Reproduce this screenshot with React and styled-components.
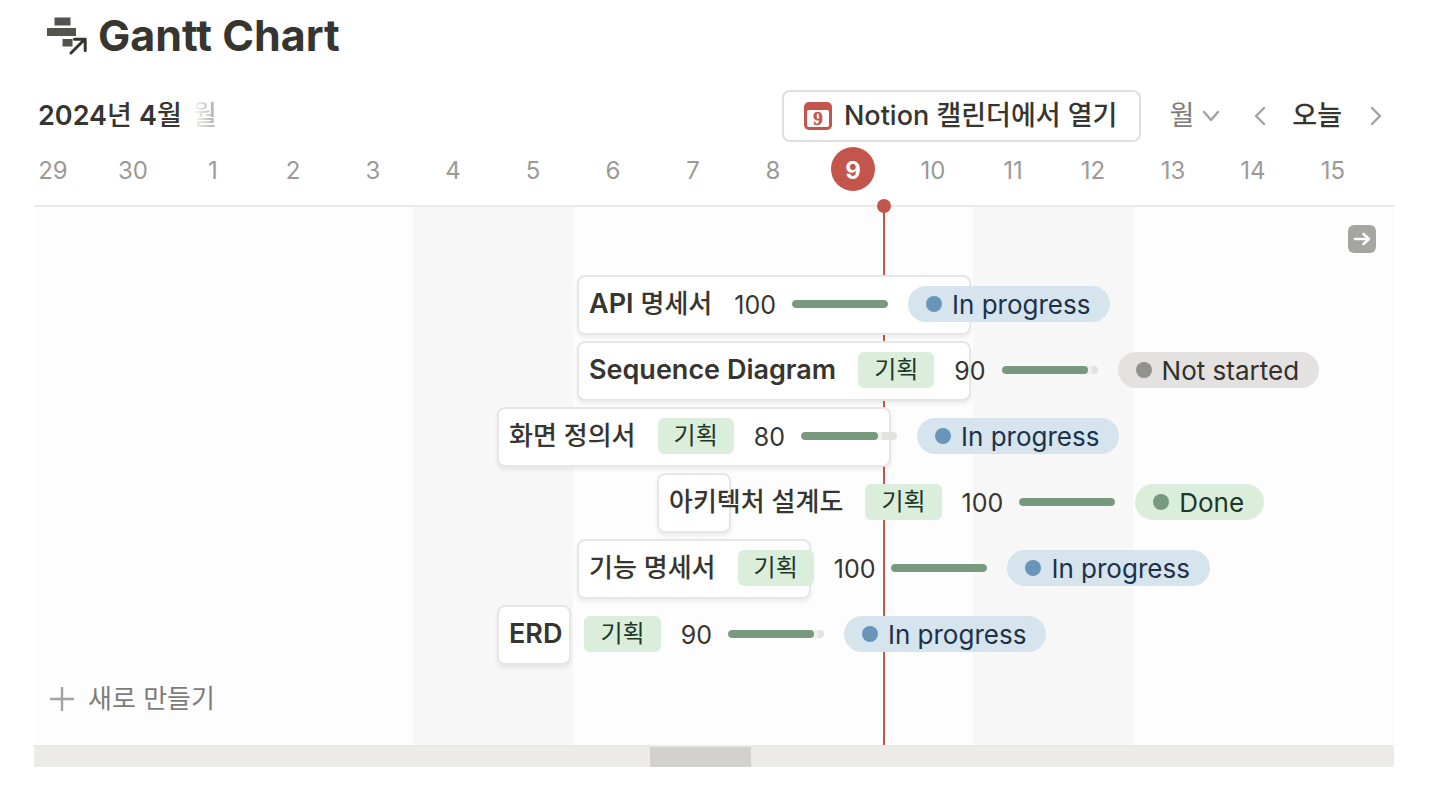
import React from "react";
import styled, { createGlobalStyle } from "styled-components";

const DAY = 80;

const GlobalStyle = createGlobalStyle`
  *, *::before, *::after { box-sizing: border-box; }
  body {
    margin: 0;
    background: #fff;
    color: #37352f;
    font-family: Inter, "Noto Sans CJK KR", sans-serif;
    font-size: 26px;
    line-height: 36px;
  }
  button {
    margin: 0;
    padding: 0;
    border: 0;
    background: none;
    color: inherit;
    font: inherit;
    cursor: pointer;
  }
`;

const Page = styled.main`
  padding: 8px 58px 18px 34px;
`;

const TitleRow = styled.header`
  display: flex;
  align-items: center;
  gap: 10px;
  height: 56px;
  padding-left: 12px;
`;

const Title = styled.h1`
  margin: 0;
  padding-bottom: 2px;
  font-size: 43px;
  line-height: 52px;
  font-weight: 700;
`;

const Toolbar = styled.div`
  display: flex;
  align-items: center;
  justify-content: space-between;
  height: 52px;
  margin-top: 26px;
  font-size: 27px;
`;

const Months = styled.div`
  display: flex;
  align-items: center;
  gap: 10px;
  padding-left: 4px;
`;

const Month = styled.h2`
  margin: 0;
  font-size: inherit;
  font-weight: 500;
`;

const NextMonth = styled.span`
  font-weight: 500;
  color: transparent;
  background: linear-gradient(90deg, #fff, #a9a8a5);
  background-clip: text;
`;

const Latin = styled.span`
  font-size: 27px;
  font-weight: 600;
`;

const Controls = styled.nav`
  display: flex;
  align-items: center;
  padding-right: 12px;
`;

const OpenButton = styled.button`
  display: flex;
  align-items: center;
  gap: 12px;
  height: 52px;
  padding: 0 22px 0 20px;
  border: 2px solid #dededc;
  border-radius: 8px;
  font-weight: 500;
`;

const ButtonText = styled.span`
  line-height: 38px;
`;

const RangeButton = styled.button`
  display: flex;
  align-items: center;
  gap: 8px;
  margin-left: 28px;
  color: #7d7c78;
`;

const StepButton = styled.button`
  display: flex;
  margin-left: ${(p) => p.$gap}px;
`;

const TodayButton = styled.button`
  margin-left: 26px;
  font-weight: 500;
  line-height: 38px;
`;

const Timeline = styled.section`
  overflow: hidden;
`;

const Days = styled.ol`
  display: grid;
  grid-auto-flow: column;
  grid-auto-columns: ${DAY}px;
  justify-content: start;
  height: 63px;
  margin: 0 0 0 -21px;
  padding: 5px 0 0;
  list-style: none;
`;

const Day = styled.li`
  display: flex;
  align-items: flex-start;
  justify-content: center;
  font-size: 24px;
  line-height: 47px;
  color: #9b9a97;
`;

const TodayBadge = styled.strong`
  width: 44px;
  height: 44px;
  border-radius: 50%;
  background: #c4554d;
  color: #fff;
  font-weight: 700;
  text-align: center;
`;

const Board = styled.div`
  display: grid;
  grid-template-columns: minmax(0, 1fr);
  border-top: 2px solid #e9e9e8;
  background: #fdfdfd;
`;

const Columns = styled.div`
  grid-area: 1 / 1;
  display: grid;
  grid-template-columns: repeat(17, ${DAY}px);
  margin-left: -21px;
`;

const Weekend = styled.div`
  grid-row: 1;
  grid-column: ${(p) => p.$from} / span 2;
  background: #f7f7f7;
`;

const TodayLine = styled.div`
  position: relative;
  grid-row: 1;
  grid-column: 11;
  width: 2px;
  margin-left: 70px;
  background: #c4554d;

  &::before {
    content: "";
    position: absolute;
    top: -8px;
    left: -6px;
    width: 14px;
    height: 14px;
    border-radius: 50%;
    background: #c4554d;
  }
`;

const Content = styled.div`
  grid-area: 1 / 1;
  z-index: 1;
  display: flex;
  flex-direction: column;
  padding: 18px 0 16px;
`;

const JumpButton = styled.button`
  display: flex;
  align-items: center;
  justify-content: center;
  align-self: flex-end;
  width: 28px;
  height: 28px;
  margin-right: 18px;
  border-radius: 6px;
  background: #a5a5a2;
`;

const Rows = styled.ul`
  display: grid;
  gap: 6px;
  margin: 22px 0 0 -21px;
  padding: 0;
  list-style: none;
`;

const Row = styled.li`
  display: grid;
  grid-template-columns: repeat(17, ${DAY}px);
`;

const Bar = styled.article`
  grid-column: ${(p) => p.$start} / span ${(p) => p.$days};
  display: flex;
  align-items: center;
  min-width: 0;
  height: 60px;
  margin: 0 2px 0 4px;
  padding: 0 0 2px 10px;
  border: 2px solid #e6e6e5;
  border-radius: 8px;
  background: #fff;
  box-shadow: 0 3px 4px rgba(15, 15, 15, 0.07);
  white-space: nowrap;

  > * { flex-shrink: 0; }
`;

const TaskName = styled.h3`
  margin: 0 22px 0 0;
  font-size: inherit;
  font-weight: 500;
  line-height: 36px;
`;

const Tag = styled.span`
  height: 36px;
  margin-right: 20px;
  padding: 0 16px;
  border-radius: 6px;
  background: #dbeddb;
  color: #1c3829;
  font-size: 24px;
`;

const Percent = styled.span`
  margin-right: 16px;
  padding-top: 2px;
  font-size: 25px;
`;

const Track = styled.div`
  width: 96px;
  height: 8px;
  margin-right: 20px;
  border-radius: 4px;
  background: #e3e2e0;
  overflow: hidden;
`;

const Fill = styled.div`
  height: 8px;
  border-radius: 4px;
  background: #77997e;
  box-shadow: 0 0 0 4px #edf3ec;
`;

const tones = {
  "In progress": { back: "#d6e4ee", dot: "#6a95bb", text: "#1d3148" },
  "Not started": { back: "#e3e2e0", dot: "#91918e", text: "#32302c" },
  Done: { back: "#dbeddb", dot: "#77997e", text: "#1c3829" },
};

const Status = styled.span`
  display: flex;
  align-items: center;
  gap: 10px;
  height: 36px;
  padding: 0 20px 0 18px;
  border-radius: 18px;
  background: ${(p) => tones[p.$tone].back};
  color: ${(p) => tones[p.$tone].text};
  line-height: 38px;

  &::before {
    content: "";
    width: 16px;
    height: 16px;
    border-radius: 50%;
    background: ${(p) => tones[p.$tone].dot};
  }
`;

const StatusText = styled.span`
  padding-top: 2px;
`;

const NewButton = styled.button`
  display: flex;
  align-items: center;
  align-self: flex-start;
  gap: 14px;
  height: 60px;
  margin-top: 4px;
  padding-left: 16px;
  color: #7d7c78;
`;

const ScrollTrack = styled.div`
  height: 22px;
  border-top: 2px solid #e8e8e4;
  background: #ecebe7;
`;

const ScrollThumb = styled.div`
  width: 101px;
  height: 20px;
  background: #d2d1cd;
`;

const days = [29, 30, 1, 2, 3, 4, 5, 6, 7, 8, 9, 10, 11, 12, 13, 14, 15];

const tasks = [
  { name: "API 명세서", start: 8, days: 5, percent: 100, status: "In progress" },
  { name: "Sequence Diagram", start: 8, days: 5, tag: "기획", percent: 90, status: "Not started" },
  { name: "화면 정의서", start: 7, days: 5, tag: "기획", percent: 80, status: "In progress" },
  { name: "아키텍처 설계도", start: 9, days: 1, tag: "기획", percent: 100, status: "Done" },
  { name: "기능 명세서", start: 8, days: 3, tag: "기획", percent: 100, status: "In progress" },
  { name: "ERD", start: 7, days: 1, tag: "기획", percent: 90, status: "In progress" },
];

/* Latin runs are set a step larger and heavier than the Hangul beside them. */
const Mixed = ({ text }) =>
  text
    .split(/([A-Za-z0-9]+(?: [A-Za-z0-9]+)*)/)
    .map((part, i) => (i % 2 ? <Latin key={i}>{part}</Latin> : part));

const GanttIcon = () => (
  <svg width="42" height="42" viewBox="0 0 42 42" aria-hidden="true">
    <path d="M8.500 2.500h16v8h-16zM1 13h29v8H1zM16.500 24h10v7.500h-10z" fill="#55534e" />
    <path d="M25 38L39 24M28.500 24.300h10.700V35.500" fill="none" stroke="#fff" strokeWidth="6" />
    <path d="M25 38L39 24M28.500 24.300h10.700V35.500" fill="none" stroke="#37352f" strokeWidth="3" strokeLinecap="round" strokeLinejoin="round" />
  </svg>
);

const CalendarIcon = () => (
  <svg width="28" height="28" viewBox="0 0 28 28" aria-hidden="true">
    <rect width="28" height="28" rx="5" fill="#c4554d" />
    <rect x="3" y="8" width="22" height="17" rx="2" fill="#fff" />
    <text x="14" y="23" textAnchor="middle" fontFamily="Liberation Serif, serif" fontWeight="700" fontSize="19" fill="#c4554d" stroke="#c4554d" strokeWidth="0.500">9</text>
  </svg>
);

const Stroke = ({ w, h, d, color = "#a3a29f", width = 2.4 }) => (
  <svg width={w} height={h} viewBox={`0 0 ${w} ${h}`} fill="none" stroke={color} strokeWidth={width} strokeLinecap="round" strokeLinejoin="round" aria-hidden="true">
    <path d={d} />
  </svg>
);

export default function App() {
  return (
    <Page>
      <GlobalStyle />
      <TitleRow>
        <GanttIcon />
        <Title>Gantt Chart</Title>
      </TitleRow>
      <Toolbar>
        <Months>
          <Month>
            <Mixed text="2024년 4월" />
          </Month>
          <NextMonth>월</NextMonth>
        </Months>
        <Controls>
          <OpenButton type="button">
            <CalendarIcon />
            <ButtonText>Notion 캘린더에서 열기</ButtonText>
          </OpenButton>
          <RangeButton type="button">
            <ButtonText>월</ButtonText>
            <Stroke w={18} h={12} d="M2 2l7 8 7-8" />
          </RangeButton>
          <StepButton type="button" $gap={34} aria-label="이전">
            <Stroke w={12} h={20} d="M10 2L2 10l8 8" />
          </StepButton>
          <TodayButton type="button">오늘</TodayButton>
          <StepButton type="button" $gap={28} aria-label="다음">
            <Stroke w={12} h={20} d="M2 2l8 8-8 8" />
          </StepButton>
        </Controls>
      </Toolbar>
      <Timeline>
        <Days>
          {days.map((d) => (
            <Day key={d}>{d === 9 ? <TodayBadge>{d}</TodayBadge> : d}</Day>
          ))}
        </Days>
        <Board>
          <Columns>
            <Weekend $from={6} />
            <Weekend $from={13} />
            <TodayLine />
          </Columns>
          <Content>
            <JumpButton type="button" aria-label="앞으로 이동">
              <Stroke w={20} h={16} d="M3 8h14M11.500 3l5.500 5-5.500 5" color="#fff" width={2.6} />
            </JumpButton>
            <Rows>
              {tasks.map((t) => (
                <Row key={t.name}>
                  <Bar $start={t.start} $days={t.days}>
                    <TaskName>
                      <Mixed text={t.name} />
                    </TaskName>
                    {t.tag && <Tag>{t.tag}</Tag>}
                    <Percent>{t.percent}</Percent>
                    <Track>
                      <Fill style={{ width: `${t.percent}%` }} />
                    </Track>
                    <Status $tone={t.status}>
                      <StatusText>{t.status}</StatusText>
                    </Status>
                  </Bar>
                </Row>
              ))}
            </Rows>
            <NewButton type="button">
              <Stroke w={24} h={24} d="M12 1v22M1 12h22" />
              <ButtonText>새로 만들기</ButtonText>
            </NewButton>
          </Content>
        </Board>
        <ScrollTrack>
          <ScrollThumb style={{ marginLeft: `${(616 / 1360) * 100}%` }} />
        </ScrollTrack>
      </Timeline>
    </Page>
  );
}
